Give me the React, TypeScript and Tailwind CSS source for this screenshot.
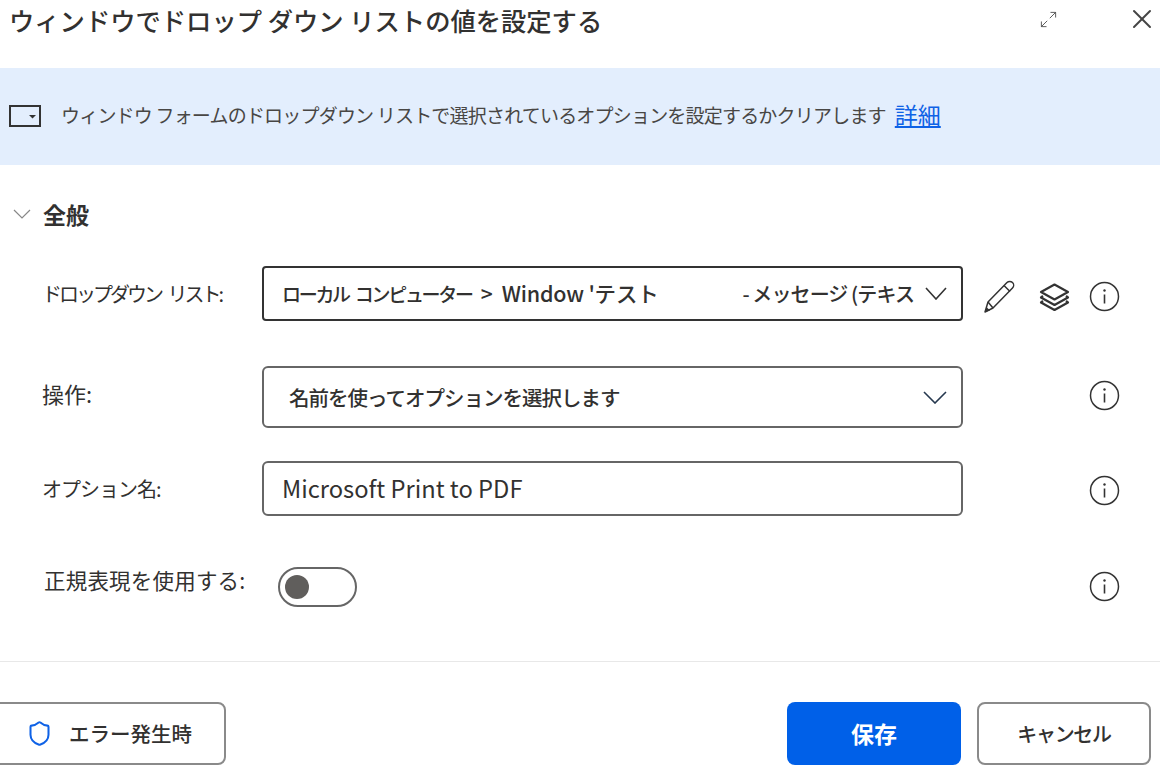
import React from "react";
import { Maximize2, Shield, X } from "lucide-react";

const FONT = "font-['Noto_Sans_CJK_JP','Noto_Sans',sans-serif]";

function InfoIcon({ className }: { className: string }) {
  return (
    <svg width="31" height="31" viewBox="0 0 31 31" fill="none" className={`absolute left-[827px] ${className}`}>
      <circle cx="15.5" cy="15.5" r="14" stroke="#333" strokeWidth="1.5" />
      <path d="M15.5 13.5v9" stroke="#333" strokeWidth="1.6" />
      <circle cx="15.5" cy="9.5" r="1.2" fill="#333" />
    </svg>
  );
}

function Chevron({ width, height, color, strokeWidth }: { width: number; height: number; color: string; strokeWidth: number }) {
  return (
    <svg width={width} height={height} viewBox={`0 0 ${width} ${height}`} fill="none" className="shrink-0">
      <path d={`M1 1L${width / 2} ${height - 1}L${width - 1} 1`} stroke={color} strokeWidth={strokeWidth} />
    </svg>
  );
}

function FormRow({ label, labelClass, height, children }: { label: string; labelClass: string; height: number; children: React.ReactNode }) {
  return (
    <div className="flex items-center" style={{ height }}>
      <label className={`w-[262px] shrink-0 whitespace-nowrap pl-[42px] leading-none text-[#323130] ${labelClass}`}>{label}</label>
      <div className="relative flex w-[701px] items-center">{children}</div>
    </div>
  );
}

export default function App() {
  return (
    <div className={`relative h-[770px] w-[1160px] overflow-hidden bg-white ${FONT}`}>
      <header className="flex h-[68px] items-start">
        <h1 className="mt-[1px] pl-[9px] text-[25.3px] leading-[38px] font-medium text-[#323130]">
          ウィンドウでドロップ ダウン リストの値を設定する
        </h1>
        <span className="absolute left-[1039px] top-[10px] text-[#555]">
          <Maximize2 size={19} strokeWidth={1.2} />
        </span>
        <span className="absolute left-[1126px] top-[3px] text-[#444]">
          <X size={32} strokeWidth={1.5} />
        </span>
      </header>

      <div className="flex h-[97px] items-center bg-[#e3eefd] pl-[9px] pb-[1px]">
        <svg width="33" height="23" viewBox="0 0 33 23" className="shrink-0">
          <rect x="1" y="1" width="30" height="20" fill="none" stroke="#333" strokeWidth="2" />
          <path d="M20 10h7l-3.5 3.5z" fill="#333" />
        </svg>
        <p className="mb-[4px] ml-[19px] whitespace-nowrap text-[19px] leading-none tracking-[-0.8px] text-[#484644]">
          ウィンドウ フォームのドロップダウン リストで選択されているオプションを設定するかクリアします
        </p>
        <a className="mb-[4px] ml-[9px] text-[23px] leading-none text-[#0f62e6] underline">詳細</a>
      </div>

      <div className="flex h-[101px] items-center pb-[3px]">
        <span className="ml-[13px]">
          <Chevron width={18} height={10} color="#888" strokeWidth={1.2} />
        </span>
        <span className="ml-[12px] text-[23px] leading-none font-bold text-[#323130]">全般</span>
      </div>

      <FormRow label="ドロップダウン リスト:" labelClass="text-[20px] tracking-[-3px] [word-spacing:5px]" height={55}>
        <div className="flex h-[55px] w-full items-center rounded-[4px] border-2 border-[#333] pr-[14px] pl-[18px] text-[21px] leading-none font-medium text-[#323130]">
          <span className="whitespace-pre text-[19px] tracking-[-2.3px] [word-spacing:4px]">ローカル コンピューター</span>
          <span className="ml-[9px]">&gt;</span>
          <span className="mb-[2px] ml-[9px] whitespace-pre text-[21.500px] tracking-[-0.2px]">Window 'テスト</span>
          <span className="ml-auto whitespace-nowrap text-[20px] tracking-[-0.9px]">- メッセージ (テキス</span>
          <span className="ml-[11px]">
            <Chevron width={22} height={13} color="#333" strokeWidth={1.6} />
          </span>
        </div>
        <svg width="33" height="36" viewBox="0 0 33 36" fill="none" className="absolute left-[721px] top-[13px]">
          <path d="M2 33l3-10L24 3.5c1.5-1.5 4-1.5 5.5 0s1.5 4 0 5.5L10 29z" stroke="#333" strokeWidth="1.5" strokeLinejoin="round" />
          <path d="M5 23l5 6M21 6.500l6 6" stroke="#333" strokeWidth="1.5" />
          <path d="M2 33l5-1.500-3.500-3.500z" fill="#333" />
        </svg>
        <svg width="31" height="29" viewBox="0 0 31 29" fill="none" className="absolute left-[777px] top-[17px]">
          <path d="M15.500 1.500L29 9l-13.500 7.500L2 9z" stroke="#333" strokeWidth="2.2" strokeLinejoin="round" />
          <path d="M4 13l-2 1.500L15.500 22 29 14.500 27 13" stroke="#333" strokeWidth="2.2" strokeLinejoin="round" />
          <path d="M4 18l-2 1.500L15.500 27 29 19.500 27 18" stroke="#333" strokeWidth="2.2" strokeLinejoin="round" />
        </svg>
        <InfoIcon className="top-[15px]" />
      </FormRow>

      <div className="mt-[45px]">
        <FormRow label="操作:" labelClass="pb-[9px] text-[22px]" height={62}>
          <div className="flex h-[62px] w-full items-center rounded-[6px] border-2 border-[#666] pr-[14px] pl-[25px] text-[20.500px] leading-none font-medium text-[#323130]">
            <span className="tracking-[-1px]">名前を使ってオプションを選択します</span>
            <span className="ml-auto">
              <Chevron width={24} height={13} color="#26384f" strokeWidth={1.6} />
            </span>
          </div>
          <InfoIcon className="top-[14px]" />
        </FormRow>
      </div>

      <div className="mt-[33px]">
        <FormRow label="オプション名:" labelClass="text-[20px] tracking-[-1px]" height={55}>
          <div className="flex h-[55px] w-full items-center rounded-[6px] border-2 border-[#666] pl-[18px] text-[23.700px] leading-none text-[#323130]">
            Microsoft Print to PDF
          </div>
          <InfoIcon className="top-[14px]" />
        </FormRow>
      </div>

      <div className="mt-[51px]">
        <FormRow label="正規表現を使用する:" labelClass="pb-[15px] !pl-[44px] text-[21.500px] tracking-[0.2px]" height={40}>
          <span className="ml-[16px] flex h-[40px] w-[79px] items-center rounded-full border-2 border-[#666] pl-[5px]">
            <span className="h-[24px] w-[24px] rounded-full bg-[#605e5c]" />
          </span>
          <InfoIcon className="top-[4px]" />
        </FormRow>
      </div>

      <div className="mt-[54px] border-t border-[#e8e8e8]" />

      <footer className="mt-[40px] flex items-start pr-[9px]">
        <button className="-ml-[10px] flex h-[63px] w-[236px] items-center justify-center gap-[16px] rounded-[8px] border-2 border-[#8a8a8a] bg-white pl-[10px] text-[20.500px] font-medium text-[#323130]">
          <Shield size={27} strokeWidth={1.8} className="-ml-[8px] text-[#0f62e6]" />
          エラー発生時
        </button>
        <button className="ml-auto h-[63px] w-[174px] rounded-[8px] bg-[#0060e8] text-[23px] font-bold text-white">保存</button>
        <button className="ml-[16px] h-[63px] w-[174px] rounded-[8px] border-2 border-[#8a8a8a] bg-white text-[20px] font-medium tracking-[-1.300px] text-[#323130]">
          キャンセル
        </button>
      </footer>
    </div>
  );
}
